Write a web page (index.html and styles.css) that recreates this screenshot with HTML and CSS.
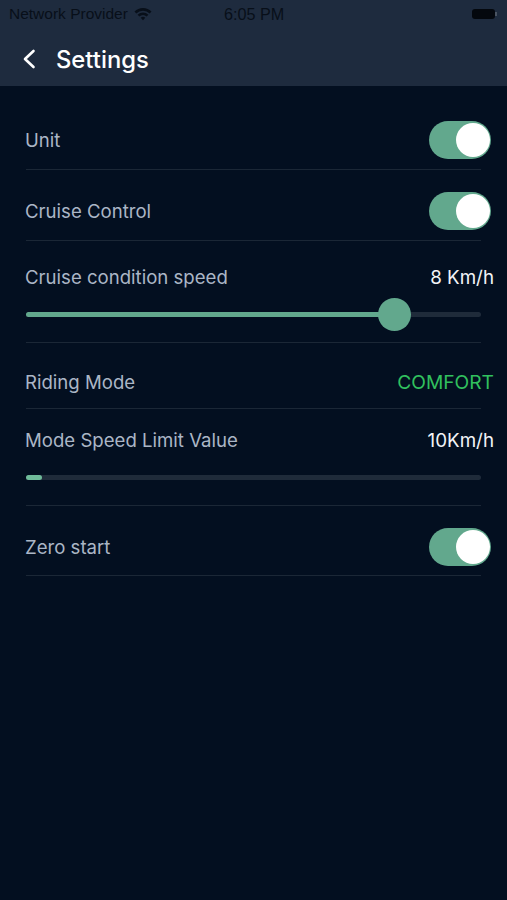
FILE: index.html
```html
<!DOCTYPE html>
<html lang="en">

<head>
    <meta charset="UTF-8">
    <meta name="viewport" content="width=device-width, initial-scale=1.0">
    <title>Settings</title>
    <link rel="stylesheet" href="styles.css">
</head>

<body>
    <!-- Header -->
    <header class="header">
        <div class="status-bar">
            <div class="carrier">
                <span>Network Provider</span>
                <svg class="wifi" viewBox="0 0 18 14" width="18" height="14">
                    <path d="M0.5 4.6 A12 12 0 0 1 17.5 4.6 L15.7 6.5 A9.5 9.5 0 0 0 2.3 6.5 Z" />
                    <path d="M3.6 7.7 A7.6 7.6 0 0 1 14.4 7.7 L12.6 9.6 A5 5 0 0 0 5.4 9.6 Z" />
                    <path d="M6.7 10.8 A3.3 3.3 0 0 1 11.3 10.8 L9 13.3 Z" />
                </svg>
            </div>
            <span class="clock">6:05 PM</span>
            <div class="battery">
                <div class="battery-body"></div>
                <div class="battery-cap"></div>
            </div>
        </div>
        <div class="title-bar">
            <svg class="back" viewBox="0 0 14 20" width="14" height="20">
                <path d="M11.5 2 L3 10 L11.5 18" />
            </svg>
            <h1>Settings</h1>
        </div>
    </header>

    <!-- Settings list -->
    <main class="list">
        <div class="row row-unit">
            <span class="label">Unit</span>
            <div class="toggle"><div class="knob"></div></div>
        </div>

        <div class="row row-cruise">
            <span class="label">Cruise Control</span>
            <div class="toggle"><div class="knob"></div></div>
        </div>

        <div class="row-slider row-speed">
            <div class="slider-head">
                <span class="label">Cruise condition speed</span>
                <span class="value">8 Km/h</span>
            </div>
            <div class="track">
                <div class="fill fill-speed"></div>
                <div class="thumb"></div>
            </div>
        </div>

        <div class="row row-mode">
            <span class="label">Riding Mode</span>
            <span class="value mode">COMFORT</span>
        </div>

        <div class="row-slider row-limit">
            <div class="slider-head">
                <span class="label">Mode Speed Limit Value</span>
                <span class="value">10Km/h</span>
            </div>
            <div class="track">
                <div class="fill fill-limit"></div>
            </div>
        </div>

        <div class="row row-zero">
            <span class="label">Zero start</span>
            <div class="toggle"><div class="knob"></div></div>
        </div>
    </main>
</body>

</html>
```

FILE: styles.css
```css
body {
    font-family: Inter, "Liberation Sans", sans-serif;
    background-color: #030f20;
    margin: 0;
    height: 900px;
    overflow: hidden;
}

.header {
    background-color: #1e2b3e;
    height: 86px;
}

.status-bar {
    display: flex;
    justify-content: space-between;
    align-items: center;
    position: relative;
    height: 28px;
    padding: 0 10px 0 9px;
    font-family: "Liberation Sans", sans-serif;
    font-size: 15.5px;
    color: #080f19;
}

.carrier {
    display: flex;
    align-items: center;
    gap: 6px;
}

.wifi {
    fill: #080f19;
}

.clock {
    position: absolute;
    left: 224px;
    font-size: 16.2px;
}

.battery {
    display: flex;
    align-items: center;
}

.battery-body {
    width: 23px;
    height: 10px;
    border-radius: 3px;
    background-color: #04080e;
}

.battery-cap {
    width: 2px;
    height: 4px;
    background-color: #4a5462;
}

.title-bar {
    display: flex;
    align-items: center;
    height: 62px;
    padding-left: 22px;
}

.back {
    fill: none;
    stroke: #ffffff;
    stroke-width: 2.6;
    stroke-linecap: round;
    stroke-linejoin: round;
}

h1 {
    margin: 0 0 0 20px;
    font-size: 23.8px;
    font-weight: 500;
    color: #ffffff;
}

.list {
    margin: 0 26px 0 26px;
}

.row,
.row-slider {
    border-bottom: 1px solid #1b2736;
    box-sizing: border-box;
}

.row {
    display: flex;
    justify-content: space-between;
    align-items: center;
}

.row-unit {
    height: 84px;
    padding-top: 24px;
}

.row-cruise {
    height: 71px;
    padding-top: 12px;
}

.row-speed {
    height: 102px;
    padding-top: 25px;
}

.row-mode {
    height: 66px;
    padding-top: 27px;
    padding-bottom: 15px;
}

.row-limit {
    height: 97px;
    padding-top: 20px;
}

.row-zero {
    height: 70px;
    padding-top: 12px;
}

.label {
    margin-left: -1px;
    font-size: 18.6px;
    color: #abb6c6;
}

.value {
    margin-right: -13px;
    font-size: 18.8px;
    color: #f2f4f7;
}

.mode {
    font-size: 19.2px;
    color: #31c05e;
}

.toggle {
    display: flex;
    justify-content: flex-end;
    align-items: center;
    box-sizing: border-box;
    width: 62px;
    height: 38px;
    margin-right: -10px;
    padding-right: 1px;
    border-radius: 19px;
    background-color: #62a88d;
}

.knob {
    width: 34px;
    height: 34px;
    border-radius: 50%;
    background-color: #ffffff;
}

.slider-head {
    display: flex;
    justify-content: space-between;
    align-items: center;
    height: 22px;
}

.track {
    position: relative;
    height: 5px;
    margin-top: 24px;
    border-radius: 3px;
    background-color: #1f2b3a;
}

.fill {
    height: 100%;
    border-radius: 3px;
    background-color: #62a88d;
}

.fill-speed {
    width: 81%;
}

.fill-limit {
    width: 16px;
    background-color: #6fbb9a;
}

.thumb {
    position: absolute;
    left: 352px;
    top: -14px;
    width: 33px;
    height: 33px;
    border-radius: 50%;
    background-color: #62a88d;
}
```
